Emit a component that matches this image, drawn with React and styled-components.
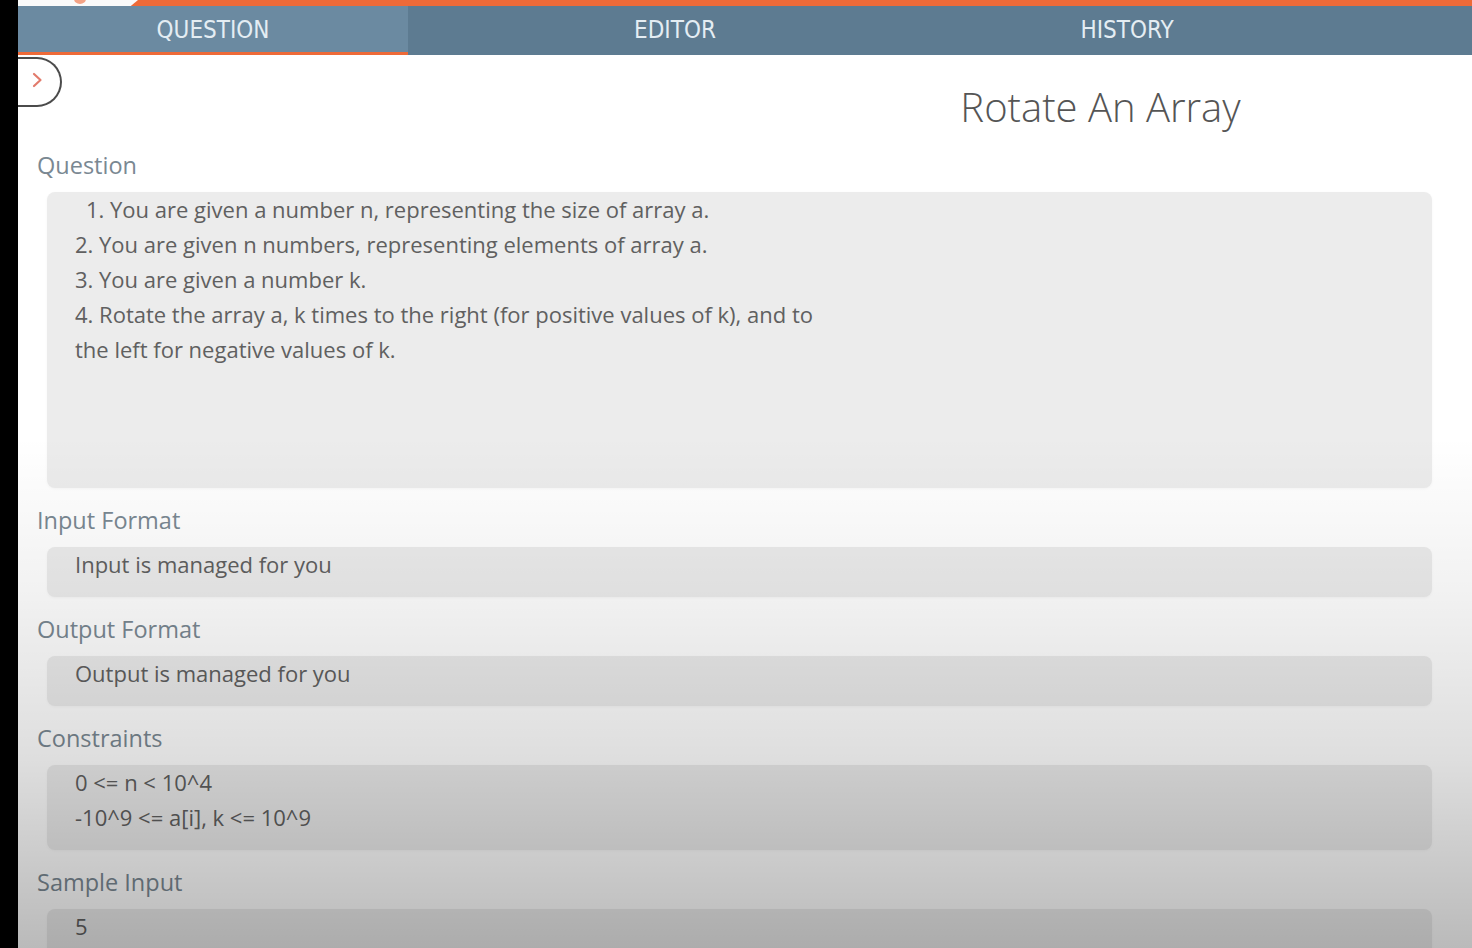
import React from "react";
import styled, { createGlobalStyle } from "styled-components";

const Global = createGlobalStyle`
  html, body { margin: 0; padding: 0; background: #000; }
  body { font-family: "Open Sans", "Noto Sans", sans-serif; }
  * { box-sizing: border-box; }
`;

const Frame = styled.div`
  display: flex;
  width: 1472px;
  height: 948px;
  overflow: hidden;
  background: #000;
  position: relative;
  &::after {
    content: "";
    position: absolute;
    inset: 0;
    pointer-events: none;
    background: linear-gradient(
      to bottom,
      rgba(0,0,0,0) 0%,
      rgba(0,0,0,0) 46%,
      rgba(0,0,0,0.05) 62%,
      rgba(0,0,0,0.13) 80%,
      rgba(0,0,0,0.27) 100%
    );
  }
`;

const Strip = styled.div`
  width: 18px;
  flex: none;
  background: #000;
`;

const Main = styled.div`
  flex: 1;
  display: flex;
  flex-direction: column;
  background: #fff;
  min-width: 0;
  & > * { flex-shrink: 0; }
`;

const TopRule = styled.div`
  height: 6px;
  background: #ee6a38;
  display: flex;
`;

const LogoTab = styled.div`
  width: 120px;
  height: 6px;
  background: #fafafa;
  clip-path: polygon(0 0, 100% 0, 94% 100%, 0 100%);
  position: relative;
  &::after {
    content: "";
    position: absolute;
    left: 56px;
    top: -6px;
    width: 12px;
    height: 10px;
    border-radius: 50%;
    background: #f3a386;
  }
`;

const TabBar = styled.div`
  display: grid;
  grid-template-columns: 390px 534px 370px 1fr;
  height: 49px;
  background: #5d7b91;
`;

const Tab = styled.div`
  display: flex;
  align-items: center;
  justify-content: center;
  padding-top: 1px;
  font-family: "DejaVu Sans Condensed", "DejaVu Sans", sans-serif;
  font-stretch: condensed;
  font-size: 24px;
  color: #e4edf3;
  background: ${(p) => (p.$active ? "#6b8aa1" : "transparent")};
  border-bottom: 3px solid ${(p) => (p.$active ? "#ee6a38" : "transparent")};
`;

const Header = styled.div`
  display: grid;
  grid-template-columns: 1fr 1fr;
  height: 95px;
  align-items: start;
`;

const Toggle = styled.button`
  margin-top: 2px;
  width: 44px;
  height: 50px;
  border: 2px solid #4b4b4b;
  border-left: none;
  border-radius: 0 26px 26px 0;
  background: #fff;
  display: flex;
  align-items: center;
  justify-content: center;
  padding: 0 4px 4px 0;
  color: #e27b6c;
`;

const Title = styled.h1`
  margin: 32px 0 0;
  justify-self: center;
  font-weight: 300;
  font-size: 40px;
  line-height: 40px;
  color: #555;
  transform: translateX(-8px);
`;

const Content = styled.div`
  display: flex;
  flex-direction: column;
  padding: 0 40px 0 19px;
`;

const Section = styled.section`
  display: flex;
  flex-direction: column;
  margin-bottom: 17px;
`;

const Label = styled.h2`
  margin: 0 0 12px;
  font-size: 23.5px;
  font-weight: 400;
  line-height: 30px;
  color: #7a8892;
`;

const Box = styled.div`
  margin-left: 10px;
  background: #ececec;
  border-radius: 8px;
  padding: 0 28px 15px;
  min-height: ${(p) => p.$min || 0}px;
  box-shadow: 0 1px 3px rgba(0, 0, 0, 0.04);
  color: #606060;
  font-size: 22px;
  line-height: 35px;
`;

const Line = styled.div`
  padding-left: ${(p) => p.$indent || 0}px;
  white-space: nowrap;
`;

const Chevron = () => (
  <svg width="12" height="16" viewBox="0 0 12 16" fill="none">
    <path d="M3 2 L9.5 8 L3 14" stroke="currentColor" strokeWidth="2.2" strokeLinecap="round" strokeLinejoin="round" />
  </svg>
);

const sections = [
  {
    label: "Question",
    min: 296,
    lines: [
      { t: "1. You are given a number n, representing the size of array a.", indent: 11 },
      { t: "2. You are given n numbers, representing elements of array a." },
      { t: "3. You are given a number k." },
      { t: "4. Rotate the array a, k times to the right (for positive values of k), and to" },
      { t: "the left for negative values of k." },
    ],
  },
  { label: "Input Format", lines: [{ t: "Input is managed for you" }] },
  { label: "Output Format", lines: [{ t: "Output is managed for you" }] },
  { label: "Constraints", lines: [{ t: "0 <= n < 10^4" }, { t: "-10^9 <= a[i], k <= 10^9" }] },
  { label: "Sample Input", lines: [{ t: "5" }] },
];

export default function App() {
  return (
    <>
      <Global />
      <Frame>
        <Strip />
        <Main>
          <TopRule>
            <LogoTab />
          </TopRule>
          <TabBar>
            <Tab $active>QUESTION</Tab>
            <Tab>EDITOR</Tab>
            <Tab>HISTORY</Tab>
            <Tab />
          </TabBar>
          <Header>
            <Toggle aria-label="toggle">
              <Chevron />
            </Toggle>
            <Title>Rotate An Array</Title>
          </Header>
          <Content>
            {sections.map((s) => (
              <Section key={s.label}>
                <Label>{s.label}</Label>
                <Box $min={s.min}>
                  {s.lines.map((l, i) => (
                    <Line key={i} $indent={l.indent}>
                      {l.t}
                    </Line>
                  ))}
                </Box>
              </Section>
            ))}
          </Content>
        </Main>
      </Frame>
    </>
  );
}
